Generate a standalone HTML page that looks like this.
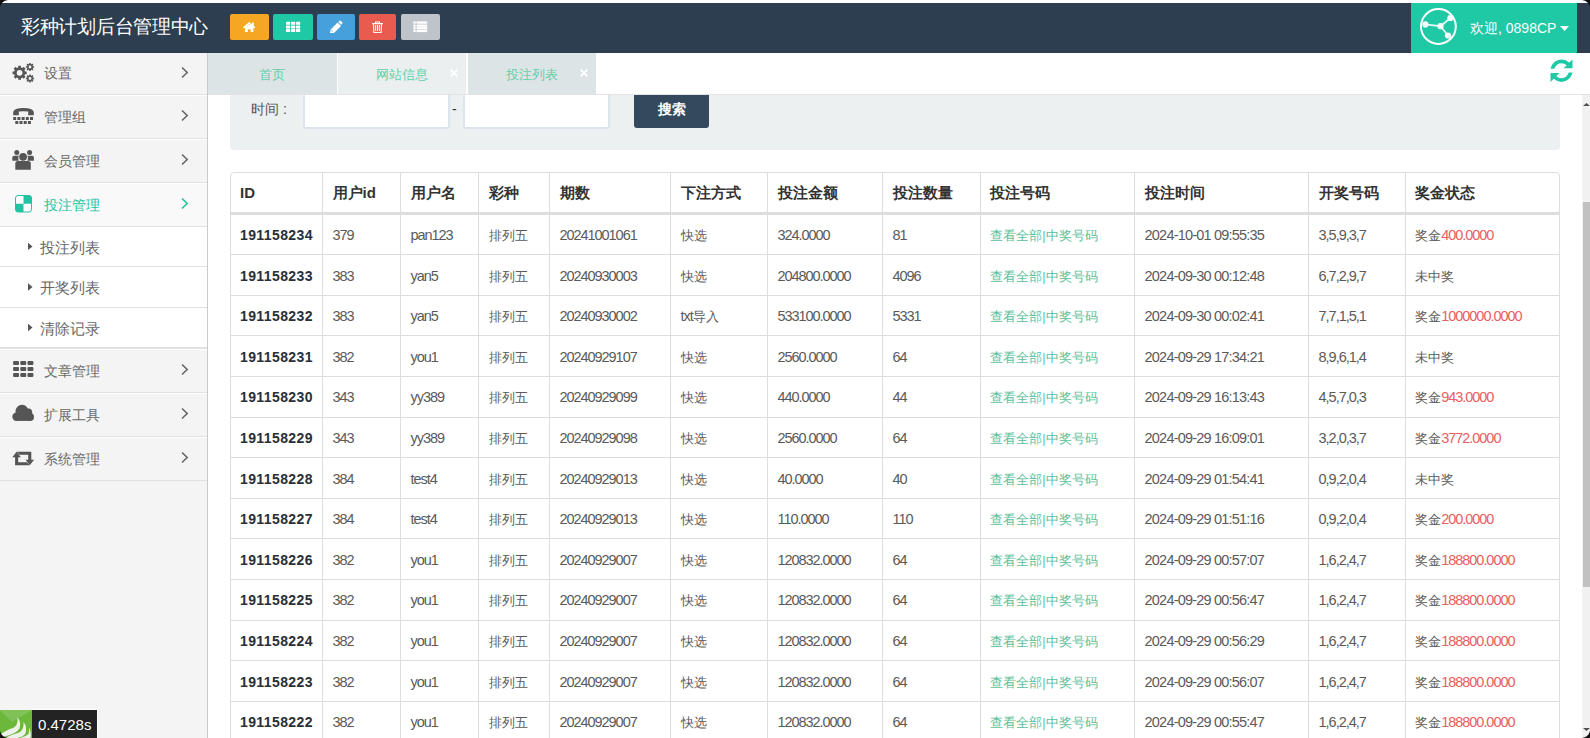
<!DOCTYPE html>
<html><head><meta charset="utf-8"><style>
*{margin:0;padding:0;box-sizing:border-box}
html,body{width:1590px;height:738px;overflow:hidden;background:#fff;font-family:"Liberation Sans",sans-serif;position:relative}
.abs{position:absolute}
#hdr{position:absolute;left:0;top:3px;width:1590px;height:50px;background:#2c3e50;z-index:4}
#title{position:absolute;left:21px;top:11.5px;letter-spacing:-0.3px;font-size:19px;line-height:24px;color:#fff;white-space:nowrap}
.hbtn{position:absolute;top:11px;height:26px;border-radius:2px}
#user{position:absolute;left:1411px;top:0;width:166px;height:50px;background:#1fc9a6}
#user .t{position:absolute;left:59px;top:16px;font-size:14px;line-height:18px;color:#fff;white-space:nowrap}
#side{position:absolute;left:0;top:53px;width:208px;height:685px;background:#f4f4f4;border-right:1px solid #cacaca}
.mi{position:absolute;left:0;width:207px;border-bottom:1px solid #e0e0e0;box-shadow:inset 0 1px 0 #fff}
.mi .t{position:absolute;left:44px;font-size:14px;line-height:18px;color:#6a6a6a;white-space:nowrap}
.mi .chev{position:absolute;left:181px}
.mi .ic{position:absolute}
#tabs{position:absolute;left:208px;top:53px;width:1382px;height:42px;background:#fff;border-bottom:1px solid #e3e3e3;z-index:5}
.tab{position:absolute;top:0;height:41px}
.tab .t{position:absolute;font-size:13px;line-height:16px;top:14px;color:#62cfa9;white-space:nowrap}
.tab .x{position:absolute;top:14px;color:#fff;font-size:14px;line-height:14px}
#panel{position:absolute;left:230px;top:60px;width:1330px;height:90px;background:#ecf0f1;border-radius:4px}
.inp{position:absolute;top:89px;height:40px;background:#fff;border:2px solid #dce4ec;border-radius:3px}
#sbtn{position:absolute;left:634px;top:88px;width:75px;height:40px;background:#34495e;border-radius:3px;color:#fff;font-size:14px;font-weight:bold;text-align:center;line-height:43px}
.tbl{position:absolute;border:1px solid #dddddd;border-radius:4px}
.th{position:absolute;height:40px;line-height:40px;padding-top:1px;font-size:15px;font-weight:bold;color:#333;white-space:nowrap}
.td{position:absolute;height:41px;line-height:41px;padding-top:1px;font-size:13.5px;color:#5a5a5a;white-space:nowrap}
.td.b{font-weight:bold;color:#26303a;font-size:14px;letter-spacing:0.4px}
.td.lk{color:#5cbf9b}
.red{color:#e8605f}
.vl{position:absolute;width:1px;background:#dddddd}
.hl{position:absolute;height:1px;background:#dddddd}
.hb{position:absolute;height:2.6px;background:#dddddd}
#sb{position:absolute;left:1582px;top:95px;width:8px;height:643px;background:#f1f1f1}
#thumb{position:absolute;left:1583px;top:202px;width:7px;height:385px;background:#c1c1c1}
.mi .t.sub{font-size:15px;line-height:20px;color:#666}
.td .n{font-size:14.5px;letter-spacing:-1.05px}
.td .c{font-size:12.7px}
.td.dt .n{letter-spacing:-0.8px}
.td.kj .n{letter-spacing:-1px}

</style></head><body>
<div id="hdr">
  <div id="title">彩种计划后台管理中心</div>
  <div class="hbtn" style="left:230px;width:39px;background:#f5a623"></div>
  <div class="hbtn" style="left:273px;width:40px;background:#1fc9a6"></div>
  <div class="hbtn" style="left:317px;width:38px;background:#45a0dc"></div>
  <div class="hbtn" style="left:359px;width:37px;background:#e85b4e"></div>
  <div class="hbtn" style="left:401px;width:39px;background:#bec4ca"></div>
  <div id="user">
    <svg class="abs" style="left:8px;top:5px" width="40" height="40" viewBox="0 0 40 40">
      <circle cx="19.4" cy="18.5" r="17.4" fill="none" stroke="#fff" stroke-width="2"/>
      <path d="M6.4 16.4 L21.5 18.2 L31.4 10 M21.5 18.2 L29 27.5" stroke="#fff" stroke-opacity=".85" stroke-width="1.8" fill="none"/>
      <circle cx="6.4" cy="16.4" r="3.1" fill="#fff" fill-opacity=".95"/>
      <circle cx="21.5" cy="18.2" r="3.1" fill="#fff" fill-opacity=".95"/>
      <circle cx="31.4" cy="10" r="3.1" fill="#fff" fill-opacity=".95"/>
      <circle cx="29" cy="27.5" r="3.1" fill="#fff" fill-opacity=".95"/>
    </svg>
    <div class="t">欢迎, 0898CP</div>
    <svg class="abs" style="left:149px;top:23px" width="9" height="5"><path d="M0 0H9L4.5 5Z" fill="#fff"/></svg>
  </div>
</div>
<!-- header button icons -->
<svg class="abs" style="left:0;top:0;z-index:6" width="450" height="50" viewBox="0 0 450 50">
  <g fill="#fff">
    <path d="M243 27.3 L249.2 22 L255.3 27.3 L254.3 28.4 L249.2 24 L244 28.4Z"/>
    <rect x="252" y="22.6" width="1.8" height="3.2"/>
    <path d="M245 27.6 L249.2 24.3 L253.4 27.6 V32 H250.6 V29.3 H247.8 V32 H245Z"/>
    <rect x="286" y="21.8" width="4.2" height="3" rx=".6"/><rect x="291" y="21.8" width="4.2" height="3" rx=".6"/><rect x="296" y="21.8" width="4.2" height="3" rx=".6"/>
    <rect x="286" y="25.5" width="4.2" height="3" rx=".6"/><rect x="291" y="25.5" width="4.2" height="3" rx=".6"/><rect x="296" y="25.5" width="4.2" height="3" rx=".6"/>
    <rect x="286" y="29.1" width="4.2" height="3" rx=".6"/><rect x="291" y="29.1" width="4.2" height="3" rx=".6"/><rect x="296" y="29.1" width="4.2" height="3" rx=".6"/>
    <path d="M329.8 33 L330.7 29.4 L337.6 22.6 L341 26 L334 32.9Z M331.3 31.6 L331.7 30 L332.9 31.2Z" fill-rule="evenodd"/>
    <path d="M338.3 21.9 L339.4 20.9 Q340.1 20.3 340.8 20.9 L342.2 22.3 Q342.8 23 342.2 23.7 L341.1 24.8Z"/>
    <path d="M372 23.1 H383 V24.3 H372Z M375 21.4 H380 V23.1 H378.9 V22.5 H376.1 V23.1 H375Z"/>
    <path d="M373.5 24.2 L373.9 32.5 H381.1 L381.5 24.2" fill="none" stroke="#fff" stroke-width="1.1"/>
    <rect x="375.2" y="25" width="1" height="6"/><rect x="377" y="25" width="1" height="6"/><rect x="378.8" y="25" width="1" height="6"/>
    <rect x="413.4" y="21.4" width="2.3" height="2.3"/><rect x="416.5" y="21.4" width="10.7" height="2.3"/>
    <rect x="413.4" y="24.5" width="2.3" height="2.3"/><rect x="416.5" y="24.5" width="10.7" height="2.3"/>
    <rect x="413.4" y="27.1" width="2.3" height="2.3"/><rect x="416.5" y="27.1" width="10.7" height="2.3"/>
    <rect x="413.4" y="29.8" width="2.3" height="2.3"/><rect x="416.5" y="29.8" width="10.7" height="2.3"/>
  </g>
</svg>
<div id="side">
  <div class="mi" style="top:-3px;height:44.5px;"><div class="t" style="top:14px">设置</div></div>
  <div class="mi" style="top:41.5px;height:44px;"><div class="t" style="top:13px">管理组</div></div>
  <div class="mi" style="top:85.5px;height:44px;"><div class="t" style="top:13px">会员管理</div></div>
  <div class="mi" style="top:129.5px;height:44px;background:#f9f9f9"><div class="t" style="top:13px;color:#22c3a2">投注管理</div></div>
  <div class="mi" style="top:173.5px;height:40px;background:#fff"><div class="t sub" style="top:11.5px;left:40px">投注列表</div></div>
  <div class="mi" style="top:213.5px;height:41px;background:#fff"><div class="t sub" style="top:11.5px;left:40px">开奖列表</div></div>
  <div class="mi" style="top:254.5px;height:41px;background:#fff;border-bottom:2px solid #e2e2e2"><div class="t sub" style="top:11.5px;left:40px">清除记录</div></div>
  <div class="mi" style="top:295.5px;height:44px;"><div class="t" style="top:13px">文章管理</div></div>
  <div class="mi" style="top:339.5px;height:44px;"><div class="t" style="top:13px">扩展工具</div></div>
  <div class="mi" style="top:383.5px;height:44px;"><div class="t" style="top:13px">系统管理</div></div>
</div>
<!-- sidebar icons -->
<svg class="abs" style="left:0;top:0;z-index:3" width="207" height="480" viewBox="0 0 207 480">
  <g fill="#555">
    <path fill-rule="evenodd" d="M18.21 67.38 L18.20 65.74 L21.00 65.74 L20.99 67.38 L22.45 67.98 L23.60 66.81 L25.59 68.80 L24.42 69.95 L25.02 71.41 L26.66 71.40 L26.66 74.20 L25.02 74.19 L24.42 75.65 L25.59 76.80 L23.60 78.79 L22.45 77.62 L20.99 78.22 L21.00 79.86 L18.20 79.86 L18.21 78.22 L16.75 77.62 L15.60 78.79 L13.61 76.80 L14.78 75.65 L14.18 74.19 L12.54 74.20 L12.54 71.40 L14.18 71.41 L14.78 69.95 L13.61 68.80 L15.60 66.81 L16.75 67.98ZM22.50 72.80A2.9 2.9 0 1 0 16.70 72.80A2.9 2.9 0 1 0 22.50 72.80Z"/>
    <path fill-rule="evenodd" d="M29.23 64.00 L29.18 62.88 L30.82 62.88 L30.77 64.00 L31.58 64.33 L32.33 63.51 L33.49 64.67 L32.67 65.42 L33.00 66.23 L34.12 66.18 L34.12 67.82 L33.00 67.77 L32.67 68.58 L33.49 69.33 L32.33 70.49 L31.58 69.67 L30.77 70.00 L30.82 71.12 L29.18 71.12 L29.23 70.00 L28.42 69.67 L27.67 70.49 L26.51 69.33 L27.33 68.58 L27.00 67.77 L25.88 67.82 L25.88 66.18 L27.00 66.23 L27.33 65.42 L26.51 64.67 L27.67 63.51 L28.42 64.33ZM31.40 67.00A1.4 1.4 0 1 0 28.60 67.00A1.4 1.4 0 1 0 31.40 67.00Z"/>
    <path fill-rule="evenodd" d="M29.23 75.50 L29.18 74.38 L30.82 74.38 L30.77 75.50 L31.58 75.83 L32.33 75.01 L33.49 76.17 L32.67 76.92 L33.00 77.73 L34.12 77.68 L34.12 79.32 L33.00 79.27 L32.67 80.08 L33.49 80.83 L32.33 81.99 L31.58 81.17 L30.77 81.50 L30.82 82.62 L29.18 82.62 L29.23 81.50 L28.42 81.17 L27.67 81.99 L26.51 80.83 L27.33 80.08 L27.00 79.27 L25.88 79.32 L25.88 77.68 L27.00 77.73 L27.33 76.92 L26.51 76.17 L27.67 75.01 L28.42 75.83ZM31.40 78.50A1.4 1.4 0 1 0 28.60 78.50A1.4 1.4 0 1 0 31.40 78.50Z"/>
    <!-- tty -->
    <path d="M13.2 115.2 V112 Q14 108 23.5 107.9 Q33 108 33.8 112 V115.2 H28.2 V111.6 Q23.5 110.8 18.8 111.6 V115.2Z"/>
    <rect x="13.2" y="117" width="3" height="3"/><rect x="17.4" y="117" width="3" height="3"/><rect x="21.6" y="117" width="3" height="3"/><rect x="25.8" y="117" width="3" height="3"/><rect x="30" y="117" width="3" height="3"/>
    <rect x="15.3" y="121" width="3" height="3"/><rect x="19.5" y="121" width="3" height="3"/><rect x="23.7" y="121" width="3" height="3"/><rect x="27.9" y="121" width="3" height="3"/>
    <!-- users -->
    <circle cx="16.8" cy="152.4" r="2.5"/><circle cx="29.6" cy="152.4" r="2.5"/>
    <circle cx="23.1" cy="156.8" r="3.9"/>
    <path d="M12.3 160.7 V157.5 Q12.3 155.8 14 155.8 H18.8 Q17.6 158.3 18.8 160.7Z"/>
    <path d="M33.9 160.7 V157.5 Q33.9 155.8 32.2 155.8 H27.4 Q28.6 158.3 27.4 160.7Z"/>
    <path d="M15.3 169.8 V163.5 Q15.3 161 17.8 161 H28.3 Q30.8 161 30.8 163.5 V169.8Z"/>
    <!-- th -->
    <rect x="13.1" y="360.9" width="5.9" height="4" rx="1"/><rect x="20.3" y="360.9" width="5.9" height="4" rx="1"/><rect x="27.5" y="360.9" width="5.9" height="4" rx="1"/>
    <rect x="13.1" y="366.9" width="5.9" height="4" rx="1"/><rect x="20.3" y="366.9" width="5.9" height="4" rx="1"/><rect x="27.5" y="366.9" width="5.9" height="4" rx="1"/>
    <rect x="13.1" y="372.9" width="5.9" height="4" rx="1"/><rect x="20.3" y="372.9" width="5.9" height="4" rx="1"/><rect x="27.5" y="372.9" width="5.9" height="4" rx="1"/>
    <!-- cloud -->
    <circle cx="16.5" cy="416.7" r="4.2"/><circle cx="22" cy="411.3" r="6.5"/><circle cx="28.4" cy="412.2" r="3.8"/><circle cx="30" cy="416.9" r="4"/>
    <rect x="16.5" y="414" width="13.5" height="6.9"/>
    <!-- retweet -->
    <path d="M12.3 457.3 L16.6 451.8 L20.9 457.3 H18.2 V462.3 H27 L29.6 465.3 H15.1 V457.3Z"/>
    <path d="M34.1 459.8 L29.8 465.3 L25.5 459.8 H28.2 V454.8 H19.4 L16.8 451.8 H31.3 V459.8Z"/>
  </g>
  <!-- chevrons -->
  <g fill="none" stroke="#666" stroke-width="1.6">
    <path d="M182 67.5 L187.2 72.5 L182 77.5"/>
    <path d="M182 110.5 L187.2 115.5 L182 120.5"/>
    <path d="M182 154.5 L187.2 159.5 L182 164.5"/>
    <path d="M182 198.5 L187.2 203.5 L182 208.5" stroke="#22c3a2"/>
    <path d="M182 364.5 L187.2 369.5 L182 374.5"/>
    <path d="M182 408.5 L187.2 413.5 L182 418.5"/>
    <path d="M182 452.5 L187.2 457.5 L182 462.5"/>
  </g>
  <!-- delicious -->
  <rect x="15.5" y="195.5" width="16" height="16.5" rx="2.5" fill="#fff" stroke="#22c3a2" stroke-width="1"/>
  <path d="M23.5 195.5 H29 Q31.5 195.5 31.5 198 V203.7 H23.5Z M15.5 203.7 H23.5 V212 H18 Q15.5 212 15.5 209.5Z" fill="#22c3a2"/>
  <!-- carets -->
  <g fill="#555">
    <path d="M28 242.7 L32.5 246.4 L28 250.1Z"/>
    <path d="M28 283.3 L32.5 287 L28 290.7Z"/>
    <path d="M28 323.8 L32.5 327.5 L28 331.2Z"/>
  </g>
</svg>
<div id="tabs">
  <div class="tab" style="left:0;width:129px;background:#dde4e6"><div class="t" style="left:51px">首页</div></div>
  <div class="tab" style="left:130px;width:128px;background:#ebeff0"><div class="t" style="left:38px">网站信息</div><svg class="x" style="left:111.8px;top:15.8px" width="8" height="8"><path d="M0.7 0.7 L7.3 7.3 M7.3 0.7 L0.7 7.3" stroke="#fff" stroke-width="1.7"/></svg></div>
  <div class="tab" style="left:260px;width:128px;background:#dde4e6"><div class="t" style="left:38px">投注列表</div><svg class="x" style="left:111.8px;top:15.8px" width="8" height="8"><path d="M0.7 0.7 L7.3 7.3 M7.3 0.7 L0.7 7.3" stroke="#fff" stroke-width="1.7"/></svg></div>
  <svg class="abs" style="left:1342px;top:6px" width="24" height="25" viewBox="0 0 24 25">
    <path fill="#1fc9a6" d="M0.5 9.8 Q1.6 5 5.5 2.3 Q8.3 0.5 11.5 0.5 Q16 0.5 19.3 3.6 L22.5 0.5 V9.3 H13.6 L16.7 6.2 Q14.4 4.2 11.5 4.2 Q6.3 4.2 4.3 9.8Z"/>
    <path fill="#1fc9a6" transform="translate(0,0.9)" d="M22.5 12.7 Q21.4 17.5 17.5 20.2 Q14.7 22 11.5 22 Q7 22 3.7 18.9 L0.5 22 V13.2 H9.4 L6.3 16.3 Q8.6 18.3 11.5 18.3 Q16.7 18.3 18.7 12.7Z"/>
  </svg>
</div>
<div id="panel"></div>
<div class="abs" style="left:251px;top:100px;font-size:14px;line-height:18px;color:#555">时间<span style="margin-left:4px">:</span></div>
<div class="inp" style="left:303px;width:147px"></div>
<div class="abs" style="left:452px;top:100px;font-size:14px;line-height:18px;color:#333">-</div>
<div class="inp" style="left:463px;width:147px"></div>
<div id="sbtn">搜索</div>
<div id="sb"></div><div id="thumb"></div><svg class="abs" style="left:1582px;top:100px" width="8" height="8"><path d="M4.5 3 L8 6 H1Z" fill="#505050"/></svg><svg class="abs" style="left:1582px;top:726px" width="8" height="6"><path d="M4.5 5 L8 2 H1Z" fill="#505050"/></svg>
<svg class="abs" style="left:0;top:709px" width="32" height="29" viewBox="0 0 32 29">
  <rect x="0" y="1" width="32" height="28" fill="#6cb83a"/>
  <path d="M0 1 H32 L12 13Z" fill="#80c257"/>
  <path d="M0.5 25.5 Q7 20.5 13 19 Q18.5 16.5 17.5 8.5 Q21.5 13 19.5 19.5 Q16 24.5 8 26.5 Q3 27.5 0.5 29Z" fill="#eef0ec"/>
  <path d="M5 29 Q12 25.5 19 23.5 Q24.5 20.5 23.5 13 Q27.5 18 25.5 24.5 Q23 28 17 29Z" fill="#eef0ec"/>
  <path d="M20 29 Q26.5 27 28.5 25 Q29.5 21.5 29 18.5 Q31.5 23 30.5 29Z" fill="#eef0ec"/>
</svg>
<div class="abs" style="left:32px;top:709px;width:66px;height:29px;background:#232323;color:#fff;font-size:15px;line-height:30px;padding-left:6px;border-top:1px solid #fff;border-right:1px solid #fff">0.4728s</div>
<!-- window corners -->
<svg class="abs" style="left:0;top:0;z-index:10" width="8" height="8"><path d="M0 0 H8 Q1.5 1 0 7Z" fill="#111"/></svg>
<svg class="abs" style="left:1582px;top:0;z-index:10" width="8" height="8"><path d="M8 0 H0 Q6.5 1 8 7Z" fill="#111"/></svg>
<svg class="abs" style="left:0;top:730px;z-index:10" width="8" height="8"><path d="M0 8 H8 Q1.5 7 0 1Z" fill="#111"/></svg>
<svg class="abs" style="left:1582px;top:730px;z-index:10" width="8" height="8"><path d="M8 8 H0 Q6.5 7 8 1Z" fill="#111"/></svg>

<div class="tbl" style="left:230px;top:172px;width:1330.0px;height:589.8000000000001px"></div><div class="th" style="left:240px;top:172px">ID</div><div class="th" style="left:332.5px;top:172px">用户id</div><div class="th" style="left:410.5px;top:172px">用户名</div><div class="th" style="left:488.5px;top:172px">彩种</div><div class="th" style="left:559.5px;top:172px">期数</div><div class="th" style="left:680.5px;top:172px">下注方式</div><div class="th" style="left:777.5px;top:172px">投注金额</div><div class="th" style="left:892.5px;top:172px">投注数量</div><div class="th" style="left:990.3px;top:172px">投注号码</div><div class="th" style="left:1144.6px;top:172px">投注时间</div><div class="th" style="left:1318.5px;top:172px">开奖号码</div><div class="th" style="left:1415.3px;top:172px">奖金状态</div><div class="vl" style="left:322.0px;top:172px;height:566px"></div><div class="vl" style="left:400.0px;top:172px;height:566px"></div><div class="vl" style="left:478.0px;top:172px;height:566px"></div><div class="vl" style="left:549.0px;top:172px;height:566px"></div><div class="vl" style="left:670.0px;top:172px;height:566px"></div><div class="vl" style="left:767.0px;top:172px;height:566px"></div><div class="vl" style="left:882.0px;top:172px;height:566px"></div><div class="vl" style="left:979.8px;top:172px;height:566px"></div><div class="vl" style="left:1134.1px;top:172px;height:566px"></div><div class="vl" style="left:1308.0px;top:172px;height:566px"></div><div class="vl" style="left:1404.8px;top:172px;height:566px"></div><div class="hb" style="left:230px;top:212px;width:1329.3px"></div><div class="td b" style="left:240px;top:214.0px">191158234</div><div class="td" style="left:332.5px;top:214.0px"><span class="n">379</span></div><div class="td" style="left:410.5px;top:214.0px"><span class="n">pan123</span></div><div class="td" style="left:488.5px;top:214.0px"><span class="c">排列五</span></div><div class="td" style="left:559.5px;top:214.0px"><span class="n">20241001061</span></div><div class="td" style="left:680.5px;top:214.0px"><span class="c">快选</span></div><div class="td" style="left:777.5px;top:214.0px"><span class="n">324.0000</span></div><div class="td" style="left:892.5px;top:214.0px"><span class="n">81</span></div><div class="td lk" style="left:990.3px;top:214.0px"><span class="c">查看全部|中奖号码</span></div><div class="td dt" style="left:1144.6px;top:214.0px"><span class="n">2024-10-01 09:55:35</span></div><div class="td kj" style="left:1318.5px;top:214.0px"><span class="n">3,5,9,3,7</span></div><div class="td" style="left:1415.3px;top:214.0px"><span class="c">奖金</span><span class="n red">400.0000</span></div><div class="hl" style="left:230px;top:254.1px;width:1329.3px"></div><div class="td b" style="left:240px;top:254.6px">191158233</div><div class="td" style="left:332.5px;top:254.6px"><span class="n">383</span></div><div class="td" style="left:410.5px;top:254.6px"><span class="n">yan5</span></div><div class="td" style="left:488.5px;top:254.6px"><span class="c">排列五</span></div><div class="td" style="left:559.5px;top:254.6px"><span class="n">20240930003</span></div><div class="td" style="left:680.5px;top:254.6px"><span class="c">快选</span></div><div class="td" style="left:777.5px;top:254.6px"><span class="n">204800.0000</span></div><div class="td" style="left:892.5px;top:254.6px"><span class="n">4096</span></div><div class="td lk" style="left:990.3px;top:254.6px"><span class="c">查看全部|中奖号码</span></div><div class="td dt" style="left:1144.6px;top:254.6px"><span class="n">2024-09-30 00:12:48</span></div><div class="td kj" style="left:1318.5px;top:254.6px"><span class="n">6,7,2,9,7</span></div><div class="td" style="left:1415.3px;top:254.6px"><span class="c">未中奖</span><span class="n red"></span></div><div class="hl" style="left:230px;top:294.7px;width:1329.3px"></div><div class="td b" style="left:240px;top:295.2px">191158232</div><div class="td" style="left:332.5px;top:295.2px"><span class="n">383</span></div><div class="td" style="left:410.5px;top:295.2px"><span class="n">yan5</span></div><div class="td" style="left:488.5px;top:295.2px"><span class="c">排列五</span></div><div class="td" style="left:559.5px;top:295.2px"><span class="n">20240930002</span></div><div class="td" style="left:680.5px;top:295.2px"><span class="n">txt</span><span class="c">导入</span></div><div class="td" style="left:777.5px;top:295.2px"><span class="n">533100.0000</span></div><div class="td" style="left:892.5px;top:295.2px"><span class="n">5331</span></div><div class="td lk" style="left:990.3px;top:295.2px"><span class="c">查看全部|中奖号码</span></div><div class="td dt" style="left:1144.6px;top:295.2px"><span class="n">2024-09-30 00:02:41</span></div><div class="td kj" style="left:1318.5px;top:295.2px"><span class="n">7,7,1,5,1</span></div><div class="td" style="left:1415.3px;top:295.2px"><span class="c">奖金</span><span class="n red">1000000.0000</span></div><div class="hl" style="left:230px;top:335.3px;width:1329.3px"></div><div class="td b" style="left:240px;top:335.8px">191158231</div><div class="td" style="left:332.5px;top:335.8px"><span class="n">382</span></div><div class="td" style="left:410.5px;top:335.8px"><span class="n">you1</span></div><div class="td" style="left:488.5px;top:335.8px"><span class="c">排列五</span></div><div class="td" style="left:559.5px;top:335.8px"><span class="n">20240929107</span></div><div class="td" style="left:680.5px;top:335.8px"><span class="c">快选</span></div><div class="td" style="left:777.5px;top:335.8px"><span class="n">2560.0000</span></div><div class="td" style="left:892.5px;top:335.8px"><span class="n">64</span></div><div class="td lk" style="left:990.3px;top:335.8px"><span class="c">查看全部|中奖号码</span></div><div class="td dt" style="left:1144.6px;top:335.8px"><span class="n">2024-09-29 17:34:21</span></div><div class="td kj" style="left:1318.5px;top:335.8px"><span class="n">8,9,6,1,4</span></div><div class="td" style="left:1415.3px;top:335.8px"><span class="c">未中奖</span><span class="n red"></span></div><div class="hl" style="left:230px;top:375.9px;width:1329.3px"></div><div class="td b" style="left:240px;top:376.4px">191158230</div><div class="td" style="left:332.5px;top:376.4px"><span class="n">343</span></div><div class="td" style="left:410.5px;top:376.4px"><span class="n">yy389</span></div><div class="td" style="left:488.5px;top:376.4px"><span class="c">排列五</span></div><div class="td" style="left:559.5px;top:376.4px"><span class="n">20240929099</span></div><div class="td" style="left:680.5px;top:376.4px"><span class="c">快选</span></div><div class="td" style="left:777.5px;top:376.4px"><span class="n">440.0000</span></div><div class="td" style="left:892.5px;top:376.4px"><span class="n">44</span></div><div class="td lk" style="left:990.3px;top:376.4px"><span class="c">查看全部|中奖号码</span></div><div class="td dt" style="left:1144.6px;top:376.4px"><span class="n">2024-09-29 16:13:43</span></div><div class="td kj" style="left:1318.5px;top:376.4px"><span class="n">4,5,7,0,3</span></div><div class="td" style="left:1415.3px;top:376.4px"><span class="c">奖金</span><span class="n red">943.0000</span></div><div class="hl" style="left:230px;top:416.5px;width:1329.3px"></div><div class="td b" style="left:240px;top:417.0px">191158229</div><div class="td" style="left:332.5px;top:417.0px"><span class="n">343</span></div><div class="td" style="left:410.5px;top:417.0px"><span class="n">yy389</span></div><div class="td" style="left:488.5px;top:417.0px"><span class="c">排列五</span></div><div class="td" style="left:559.5px;top:417.0px"><span class="n">20240929098</span></div><div class="td" style="left:680.5px;top:417.0px"><span class="c">快选</span></div><div class="td" style="left:777.5px;top:417.0px"><span class="n">2560.0000</span></div><div class="td" style="left:892.5px;top:417.0px"><span class="n">64</span></div><div class="td lk" style="left:990.3px;top:417.0px"><span class="c">查看全部|中奖号码</span></div><div class="td dt" style="left:1144.6px;top:417.0px"><span class="n">2024-09-29 16:09:01</span></div><div class="td kj" style="left:1318.5px;top:417.0px"><span class="n">3,2,0,3,7</span></div><div class="td" style="left:1415.3px;top:417.0px"><span class="c">奖金</span><span class="n red">3772.0000</span></div><div class="hl" style="left:230px;top:457.1px;width:1329.3px"></div><div class="td b" style="left:240px;top:457.6px">191158228</div><div class="td" style="left:332.5px;top:457.6px"><span class="n">384</span></div><div class="td" style="left:410.5px;top:457.6px"><span class="n">test4</span></div><div class="td" style="left:488.5px;top:457.6px"><span class="c">排列五</span></div><div class="td" style="left:559.5px;top:457.6px"><span class="n">20240929013</span></div><div class="td" style="left:680.5px;top:457.6px"><span class="c">快选</span></div><div class="td" style="left:777.5px;top:457.6px"><span class="n">40.0000</span></div><div class="td" style="left:892.5px;top:457.6px"><span class="n">40</span></div><div class="td lk" style="left:990.3px;top:457.6px"><span class="c">查看全部|中奖号码</span></div><div class="td dt" style="left:1144.6px;top:457.6px"><span class="n">2024-09-29 01:54:41</span></div><div class="td kj" style="left:1318.5px;top:457.6px"><span class="n">0,9,2,0,4</span></div><div class="td" style="left:1415.3px;top:457.6px"><span class="c">未中奖</span><span class="n red"></span></div><div class="hl" style="left:230px;top:497.7px;width:1329.3px"></div><div class="td b" style="left:240px;top:498.2px">191158227</div><div class="td" style="left:332.5px;top:498.2px"><span class="n">384</span></div><div class="td" style="left:410.5px;top:498.2px"><span class="n">test4</span></div><div class="td" style="left:488.5px;top:498.2px"><span class="c">排列五</span></div><div class="td" style="left:559.5px;top:498.2px"><span class="n">20240929013</span></div><div class="td" style="left:680.5px;top:498.2px"><span class="c">快选</span></div><div class="td" style="left:777.5px;top:498.2px"><span class="n">110.0000</span></div><div class="td" style="left:892.5px;top:498.2px"><span class="n">110</span></div><div class="td lk" style="left:990.3px;top:498.2px"><span class="c">查看全部|中奖号码</span></div><div class="td dt" style="left:1144.6px;top:498.2px"><span class="n">2024-09-29 01:51:16</span></div><div class="td kj" style="left:1318.5px;top:498.2px"><span class="n">0,9,2,0,4</span></div><div class="td" style="left:1415.3px;top:498.2px"><span class="c">奖金</span><span class="n red">200.0000</span></div><div class="hl" style="left:230px;top:538.3px;width:1329.3px"></div><div class="td b" style="left:240px;top:538.8px">191158226</div><div class="td" style="left:332.5px;top:538.8px"><span class="n">382</span></div><div class="td" style="left:410.5px;top:538.8px"><span class="n">you1</span></div><div class="td" style="left:488.5px;top:538.8px"><span class="c">排列五</span></div><div class="td" style="left:559.5px;top:538.8px"><span class="n">20240929007</span></div><div class="td" style="left:680.5px;top:538.8px"><span class="c">快选</span></div><div class="td" style="left:777.5px;top:538.8px"><span class="n">120832.0000</span></div><div class="td" style="left:892.5px;top:538.8px"><span class="n">64</span></div><div class="td lk" style="left:990.3px;top:538.8px"><span class="c">查看全部|中奖号码</span></div><div class="td dt" style="left:1144.6px;top:538.8px"><span class="n">2024-09-29 00:57:07</span></div><div class="td kj" style="left:1318.5px;top:538.8px"><span class="n">1,6,2,4,7</span></div><div class="td" style="left:1415.3px;top:538.8px"><span class="c">奖金</span><span class="n red">188800.0000</span></div><div class="hl" style="left:230px;top:578.9px;width:1329.3px"></div><div class="td b" style="left:240px;top:579.4px">191158225</div><div class="td" style="left:332.5px;top:579.4px"><span class="n">382</span></div><div class="td" style="left:410.5px;top:579.4px"><span class="n">you1</span></div><div class="td" style="left:488.5px;top:579.4px"><span class="c">排列五</span></div><div class="td" style="left:559.5px;top:579.4px"><span class="n">20240929007</span></div><div class="td" style="left:680.5px;top:579.4px"><span class="c">快选</span></div><div class="td" style="left:777.5px;top:579.4px"><span class="n">120832.0000</span></div><div class="td" style="left:892.5px;top:579.4px"><span class="n">64</span></div><div class="td lk" style="left:990.3px;top:579.4px"><span class="c">查看全部|中奖号码</span></div><div class="td dt" style="left:1144.6px;top:579.4px"><span class="n">2024-09-29 00:56:47</span></div><div class="td kj" style="left:1318.5px;top:579.4px"><span class="n">1,6,2,4,7</span></div><div class="td" style="left:1415.3px;top:579.4px"><span class="c">奖金</span><span class="n red">188800.0000</span></div><div class="hl" style="left:230px;top:619.5px;width:1329.3px"></div><div class="td b" style="left:240px;top:620.0px">191158224</div><div class="td" style="left:332.5px;top:620.0px"><span class="n">382</span></div><div class="td" style="left:410.5px;top:620.0px"><span class="n">you1</span></div><div class="td" style="left:488.5px;top:620.0px"><span class="c">排列五</span></div><div class="td" style="left:559.5px;top:620.0px"><span class="n">20240929007</span></div><div class="td" style="left:680.5px;top:620.0px"><span class="c">快选</span></div><div class="td" style="left:777.5px;top:620.0px"><span class="n">120832.0000</span></div><div class="td" style="left:892.5px;top:620.0px"><span class="n">64</span></div><div class="td lk" style="left:990.3px;top:620.0px"><span class="c">查看全部|中奖号码</span></div><div class="td dt" style="left:1144.6px;top:620.0px"><span class="n">2024-09-29 00:56:29</span></div><div class="td kj" style="left:1318.5px;top:620.0px"><span class="n">1,6,2,4,7</span></div><div class="td" style="left:1415.3px;top:620.0px"><span class="c">奖金</span><span class="n red">188800.0000</span></div><div class="hl" style="left:230px;top:660.1px;width:1329.3px"></div><div class="td b" style="left:240px;top:660.6px">191158223</div><div class="td" style="left:332.5px;top:660.6px"><span class="n">382</span></div><div class="td" style="left:410.5px;top:660.6px"><span class="n">you1</span></div><div class="td" style="left:488.5px;top:660.6px"><span class="c">排列五</span></div><div class="td" style="left:559.5px;top:660.6px"><span class="n">20240929007</span></div><div class="td" style="left:680.5px;top:660.6px"><span class="c">快选</span></div><div class="td" style="left:777.5px;top:660.6px"><span class="n">120832.0000</span></div><div class="td" style="left:892.5px;top:660.6px"><span class="n">64</span></div><div class="td lk" style="left:990.3px;top:660.6px"><span class="c">查看全部|中奖号码</span></div><div class="td dt" style="left:1144.6px;top:660.6px"><span class="n">2024-09-29 00:56:07</span></div><div class="td kj" style="left:1318.5px;top:660.6px"><span class="n">1,6,2,4,7</span></div><div class="td" style="left:1415.3px;top:660.6px"><span class="c">奖金</span><span class="n red">188800.0000</span></div><div class="hl" style="left:230px;top:700.7px;width:1329.3px"></div><div class="td b" style="left:240px;top:701.2px">191158222</div><div class="td" style="left:332.5px;top:701.2px"><span class="n">382</span></div><div class="td" style="left:410.5px;top:701.2px"><span class="n">you1</span></div><div class="td" style="left:488.5px;top:701.2px"><span class="c">排列五</span></div><div class="td" style="left:559.5px;top:701.2px"><span class="n">20240929007</span></div><div class="td" style="left:680.5px;top:701.2px"><span class="c">快选</span></div><div class="td" style="left:777.5px;top:701.2px"><span class="n">120832.0000</span></div><div class="td" style="left:892.5px;top:701.2px"><span class="n">64</span></div><div class="td lk" style="left:990.3px;top:701.2px"><span class="c">查看全部|中奖号码</span></div><div class="td dt" style="left:1144.6px;top:701.2px"><span class="n">2024-09-29 00:55:47</span></div><div class="td kj" style="left:1318.5px;top:701.2px"><span class="n">1,6,2,4,7</span></div><div class="td" style="left:1415.3px;top:701.2px"><span class="c">奖金</span><span class="n red">188800.0000</span></div>
</body></html>
